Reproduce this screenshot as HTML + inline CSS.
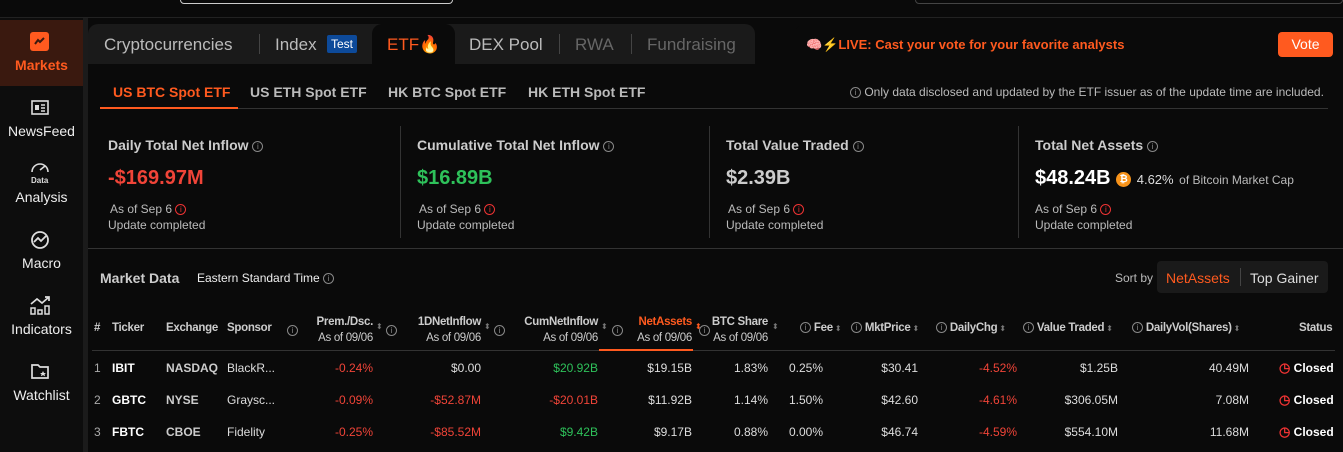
<!DOCTYPE html>
<html><head><meta charset="utf-8"><style>
*{margin:0;padding:0;box-sizing:border-box}
body{width:1343px;height:452px;background:#0a0a0a;font-family:"Liberation Sans",sans-serif;color:#ddd;position:relative;overflow:hidden}
.a{position:absolute;white-space:nowrap}
.r{text-align:right}
.side{left:0;top:18px;width:83px;height:434px;background:#0d0d0d}
.sep{left:83px;top:18px;width:5px;height:434px;background:#1b1b1b}
.nav{width:83px;text-align:center;font-size:14px;color:#eee}
.i{display:inline-block;width:11px;height:11px;border:1px solid #888;border-radius:50%;font-size:8px;line-height:9px;text-align:center;color:#888;vertical-align:middle;font-style:normal;font-weight:normal}
.th{font-size:11.5px;color:#ccc;line-height:16px;font-weight:bold;letter-spacing:-0.3px}
.td{font-size:12px;color:#ddd}
.sv{font-size:8px;color:#777;margin-left:2px;font-weight:normal}
.red{color:#f04438}.grn{color:#2ec15a}.org{color:#ff5a1f}
.td.red{color:#f04438}.td.grn{color:#2ec15a}
</style></head><body>
<div class="a" style="left:180px;top:-10px;width:273px;height:14px;border:1px solid #ccc;border-radius:4px"></div>
<div class="a" style="left:915px;top:-10px;width:428px;height:14px;border:1px solid #444;border-radius:4px"></div>
<div class="a" style="left:0;top:17px;width:1343px;height:1px;background:#222"></div>
<div class="a side"></div><div class="a sep"></div>
<div class="a" style="left:0;top:20px;width:83px;height:66px;background:#3a190f"></div>
<div class="a" style="left:30px;top:32px;width:19px;height:19px;background:#ff5a1f;border-radius:3px"><svg width="19" height="19"><path d="M5 12 L8 8 L10 10 L14 6" stroke="#3a190f" stroke-width="2" fill="none"/></svg></div>
<div class="a nav org" style="top:57px;font-weight:bold">Markets</div>
<svg class="a" style="left:31px;top:100px" width="18" height="16"><rect x="1" y="1" width="16" height="13" fill="none" stroke="#ddd" stroke-width="1.6"/><rect x="4" y="5" width="4" height="5" fill="#ddd"/><path d="M10 5h4M10 8h4M10 11h4" stroke="#ddd" stroke-width="1.4"/></svg>
<div class="a nav" style="top:123px">NewsFeed</div>
<svg class="a" style="left:29px;top:162px" width="22" height="22"><path d="M3 10 A8 8 0 0 1 19 10" stroke="#ddd" stroke-width="1.6" fill="none"/><path d="M11 8 L16 4" stroke="#ddd" stroke-width="1.6"/><text x="2" y="21" font-size="8" font-weight="bold" fill="#ddd" font-family="Liberation Sans">Data</text></svg>
<div class="a nav" style="top:189px">Analysis</div>
<svg class="a" style="left:30px;top:230px" width="20" height="20"><circle cx="10" cy="10" r="8" stroke="#ddd" stroke-width="1.8" fill="none"/><path d="M4 12 L8 8 L11 11 L16 6" stroke="#ddd" stroke-width="1.8" fill="none"/></svg>
<div class="a nav" style="top:255px">Macro</div>
<svg class="a" style="left:29px;top:295px" width="22" height="20"><path d="M2 9 L8 4 L13 8 L20 2 M16 2h4v4" stroke="#ddd" stroke-width="1.7" fill="none"/><rect x="2" y="13" width="4" height="6" fill="none" stroke="#ddd" stroke-width="1.5"/><rect x="9" y="15" width="4" height="4" fill="none" stroke="#ddd" stroke-width="1.5"/><rect x="16" y="11" width="4" height="8" fill="none" stroke="#ddd" stroke-width="1.5"/></svg>
<div class="a nav" style="top:321px">Indicators</div>
<svg class="a" style="left:30px;top:362px" width="20" height="18"><path d="M2 3h6l2 2h8v11H2z" stroke="#ddd" stroke-width="1.7" fill="none"/><path d="M13 9l1 2h2l-1.5 1.3.6 2-2.1-1.2-2.1 1.2.6-2L10 11h2z" fill="#ddd"/></svg>
<div class="a nav" style="top:387px">Watchlist</div>

<div class="a" style="left:88px;top:24px;width:667px;height:40px;background:#1a1a1a;border-radius:10px 10px 0 0"></div>
<div class="a" style="left:372px;top:24px;width:83px;height:40px;background:#0a0a0a;border-radius:10px 10px 0 0"></div>
<div class="a" style="left:104px;top:35px;font-size:17px;color:#bbb">Cryptocurrencies</div>
<div class="a" style="left:259px;top:34px;width:1px;height:20px;background:#444"></div>
<div class="a" style="left:275px;top:35px;font-size:17px;color:#bbb">Index</div>
<div class="a" style="left:327px;top:35px;width:30px;height:18px;background:#0d4a9a;color:#fff;font-size:12px;text-align:center;line-height:18px;border-radius:2px">Test</div>
<div class="a org" style="left:387px;top:35px;font-size:17px">ETF🔥</div>
<div class="a" style="left:469px;top:35px;font-size:17px;color:#bbb">DEX Pool</div>
<div class="a" style="left:559px;top:34px;width:1px;height:20px;background:#444"></div>
<div class="a" style="left:575px;top:35px;font-size:17px;color:#666">RWA</div>
<div class="a" style="left:631px;top:34px;width:1px;height:20px;background:#444"></div>
<div class="a" style="left:647px;top:35px;font-size:17px;color:#666">Fundraising</div>
<div class="a" style="left:795px;top:24px;width:548px;height:40px;background:#0a0a0a;border-radius:10px 0 0 0"></div>
<div class="a org" style="left:806px;top:37px;font-size:13px;font-weight:bold">🧠⚡LIVE: Cast your vote for your favorite analysts</div>
<div class="a" style="left:1278px;top:32px;width:55px;height:25px;background:#ff5a1f;border-radius:4px;color:#fff;font-size:14px;text-align:center;line-height:25px">Vote</div>

<div class="a" style="left:100px;top:108px;width:1228px;height:1px;background:#333"></div>
<div class="a" style="left:100px;top:107px;width:138px;height:2px;background:#ff5a1f"></div>
<div class="a org" style="left:113px;top:84px;font-size:14px;font-weight:bold">US BTC Spot ETF</div>
<div class="a" style="left:250px;top:84px;font-size:14px;font-weight:bold;color:#bbb">US ETH Spot ETF</div>
<div class="a" style="left:388px;top:84px;font-size:14px;font-weight:bold;color:#bbb">HK BTC Spot ETF</div>
<div class="a" style="left:528px;top:84px;font-size:14px;font-weight:bold;color:#bbb">HK ETH Spot ETF</div>
<div class="a" style="left:850px;top:85px;font-size:12px;color:#bbb"><i class="i">i</i> Only data disclosed and updated by the ETF issuer as of the update time are included.</div>

<div class="a" style="left:400px;top:126px;width:1px;height:112px;background:#333"></div>
<div class="a" style="left:709px;top:126px;width:1px;height:112px;background:#333"></div>
<div class="a" style="left:1018px;top:126px;width:1px;height:112px;background:#333"></div>
<div class="a" style="left:88px;top:248px;width:1255px;height:1px;background:#333"></div>

<div class="a" style="left:108px;top:137px;font-size:14px;font-weight:bold;color:#ccc">Daily Total Net Inflow <i class="i">i</i></div>
<div class="a red" style="left:108px;top:167px;font-size:20px;font-weight:bold">-$169.97M</div>
<div class="a" style="left:110px;top:202px;font-size:12px;color:#bbb">As of Sep 6 <i class="i" style="border-color:#e33;color:#e33">i</i></div>
<div class="a" style="left:108px;top:218px;font-size:12px;color:#bbb">Update completed</div>

<div class="a" style="left:417px;top:137px;font-size:14px;font-weight:bold;color:#ccc">Cumulative Total Net Inflow <i class="i">i</i></div>
<div class="a grn" style="left:417px;top:167px;font-size:20px;font-weight:bold">$16.89B</div>
<div class="a" style="left:419px;top:202px;font-size:12px;color:#bbb">As of Sep 6 <i class="i" style="border-color:#e33;color:#e33">i</i></div>
<div class="a" style="left:417px;top:218px;font-size:12px;color:#bbb">Update completed</div>

<div class="a" style="left:726px;top:137px;font-size:14px;font-weight:bold;color:#ccc">Total Value Traded <i class="i">i</i></div>
<div class="a" style="left:726px;top:167px;font-size:20px;font-weight:bold;color:#ccc">$2.39B</div>
<div class="a" style="left:728px;top:202px;font-size:12px;color:#bbb">As of Sep 6 <i class="i" style="border-color:#e33;color:#e33">i</i></div>
<div class="a" style="left:726px;top:218px;font-size:12px;color:#bbb">Update completed</div>

<div class="a" style="left:1035px;top:137px;font-size:14px;font-weight:bold;color:#ccc">Total Net Assets <i class="i">i</i></div>
<div class="a" style="left:1035px;top:167px;font-size:20px;font-weight:bold;color:#fff">$48.24B <span style="display:inline-block;width:15px;height:15px;border-radius:50%;background:#f7931a;color:#fff;font-size:10px;text-align:center;line-height:15px;vertical-align:2px">₿</span> <span style="font-size:13px;font-weight:normal;color:#ddd">4.62%</span> <span style="font-size:12px;font-weight:normal;color:#bbb">of Bitcoin Market Cap</span></div>
<div class="a" style="left:1035px;top:202px;font-size:12px;color:#bbb">As of Sep 6 <i class="i" style="border-color:#e33;color:#e33">i</i></div>
<div class="a" style="left:1035px;top:218px;font-size:12px;color:#bbb">Update completed</div>

<div class="a" style="left:100px;top:270px;font-size:14px;font-weight:bold;color:#ccc">Market Data</div>
<div class="a" style="left:197px;top:271px;font-size:12px;color:#eee">Eastern Standard Time <i class="i">i</i></div>
<div class="a" style="left:1115px;top:271px;font-size:12px;color:#bbb">Sort by</div>
<div class="a" style="left:1157px;top:261px;width:171px;height:32px;background:#1a1a1a;border-radius:4px"></div>
<div class="a org" style="left:1166px;top:270px;font-size:14px">NetAssets</div>
<div class="a" style="left:1240px;top:268px;width:1px;height:18px;background:#444"></div>
<div class="a" style="left:1250px;top:270px;font-size:14px;color:#ddd">Top Gainer</div>

<div class="a" style="left:92px;top:350px;width:1243px;height:1px;background:#333"></div>
<div class="a" style="left:599px;top:349px;width:94px;height:2px;background:#ff5a1f"></div>
<div class="a th" style="left:94px;top:320px">#</div>
<div class="a th" style="left:112px;top:320px">Ticker</div>
<div class="a th" style="left:166px;top:320px">Exchange</div>
<div class="a th" style="left:227px;top:320px">Sponsor</div>

<div class="a" style="left:287px;top:322px"><i class="i">i</i></div>
<div class="a th r" style="right:970px;top:314px">Prem./Dsc.<br><span style="font-weight:normal">As of 09/06</span></div><div class="a sv" style="left:374px;top:322px">⬍</div>
<div class="a" style="left:386px;top:322px"><i class="i">i</i></div>
<div class="a th r" style="right:862px;top:314px">1DNetInflow<br><span style="font-weight:normal">As of 09/06</span></div><div class="a sv" style="left:482px;top:322px">⬍</div>
<div class="a" style="left:494px;top:322px"><i class="i">i</i></div>
<div class="a th r" style="right:745px;top:314px">CumNetInflow<br><span style="font-weight:normal">As of 09/06</span></div><div class="a sv" style="left:599px;top:322px">⬍</div>
<div class="a" style="left:612px;top:322px"><i class="i">i</i></div>
<div class="a th r" style="right:651px;top:314px"><span class="org">NetAssets</span><br><span style="font-weight:normal">As of 09/06</span></div><div class="a sv" style="left:693px;top:322px;color:#ff5a1f">⬍</div>
<div class="a" style="left:699px;top:322px"><i class="i">i</i></div>
<div class="a th r" style="right:575px;top:314px">BTC Share<br><span style="font-weight:normal">As of 09/06</span></div><div class="a sv" style="left:770px;top:322px">⬍</div>
<div class="a th" style="left:800px;top:320px"><i class="i">i</i> Fee<span class="sv">⬍</span></div>
<div class="a th" style="left:851px;top:320px"><i class="i">i</i> MktPrice<span class="sv">⬍</span></div>
<div class="a th" style="left:936px;top:320px"><i class="i">i</i> DailyChg<span class="sv">⬍</span></div>
<div class="a th" style="left:1023px;top:320px"><i class="i">i</i> Value Traded<span class="sv">⬍</span></div>
<div class="a th" style="left:1132px;top:320px"><i class="i">i</i> DailyVol(Shares)<span class="sv">⬍</span></div>
<div class="a th" style="left:1299px;top:320px">Status</div>

<!-- rows -->
<div class="a td" style="left:94px;top:361px;color:#aaa">1</div><div class="a td" style="left:112px;top:361px;font-weight:bold;color:#fff">IBIT</div><div class="a td" style="left:166px;top:361px;font-weight:bold;color:#ccc">NASDAQ</div><div class="a td" style="left:227px;top:361px">BlackR...</div>
<div class="a td red r" style="right:970px;top:361px">-0.24%</div><div class="a td r" style="right:862px;top:361px">$0.00</div><div class="a td grn r" style="right:745px;top:361px">$20.92B</div><div class="a td r" style="right:651px;top:361px">$19.15B</div><div class="a td r" style="right:575px;top:361px">1.83%</div><div class="a td" style="left:789px;top:361px">0.25%</div><div class="a td r" style="right:425px;top:361px">$30.41</div><div class="a td red r" style="right:326px;top:361px">-4.52%</div><div class="a td r" style="right:225px;top:361px">$1.25B</div><div class="a td r" style="right:94px;top:361px">40.49M</div>
<div class="a td" style="left:1279px;top:360px;font-weight:bold;color:#fff"><span style="color:#e33;font-size:13px">◷</span> Closed</div>

<div class="a td" style="left:94px;top:393px;color:#aaa">2</div><div class="a td" style="left:112px;top:393px;font-weight:bold;color:#fff">GBTC</div><div class="a td" style="left:166px;top:393px;font-weight:bold;color:#ccc">NYSE</div><div class="a td" style="left:227px;top:393px">Graysc...</div>
<div class="a td red r" style="right:970px;top:393px">-0.09%</div><div class="a td red r" style="right:862px;top:393px">-$52.87M</div><div class="a td red r" style="right:745px;top:393px">-$20.01B</div><div class="a td r" style="right:651px;top:393px">$11.92B</div><div class="a td r" style="right:575px;top:393px">1.14%</div><div class="a td" style="left:789px;top:393px">1.50%</div><div class="a td r" style="right:425px;top:393px">$42.60</div><div class="a td red r" style="right:326px;top:393px">-4.61%</div><div class="a td r" style="right:225px;top:393px">$306.05M</div><div class="a td r" style="right:94px;top:393px">7.08M</div>
<div class="a td" style="left:1279px;top:392px;font-weight:bold;color:#fff"><span style="color:#e33;font-size:13px">◷</span> Closed</div>

<div class="a td" style="left:94px;top:425px;color:#aaa">3</div><div class="a td" style="left:112px;top:425px;font-weight:bold;color:#fff">FBTC</div><div class="a td" style="left:166px;top:425px;font-weight:bold;color:#ccc">CBOE</div><div class="a td" style="left:227px;top:425px">Fidelity</div>
<div class="a td red r" style="right:970px;top:425px">-0.25%</div><div class="a td red r" style="right:862px;top:425px">-$85.52M</div><div class="a td grn r" style="right:745px;top:425px">$9.42B</div><div class="a td r" style="right:651px;top:425px">$9.17B</div><div class="a td r" style="right:575px;top:425px">0.88%</div><div class="a td" style="left:789px;top:425px">0.00%</div><div class="a td r" style="right:425px;top:425px">$46.74</div><div class="a td red r" style="right:326px;top:425px">-4.59%</div><div class="a td r" style="right:225px;top:425px">$554.10M</div><div class="a td r" style="right:94px;top:425px">11.68M</div>
<div class="a td" style="left:1279px;top:424px;font-weight:bold;color:#fff"><span style="color:#e33;font-size:13px">◷</span> Closed</div>
</body></html>
